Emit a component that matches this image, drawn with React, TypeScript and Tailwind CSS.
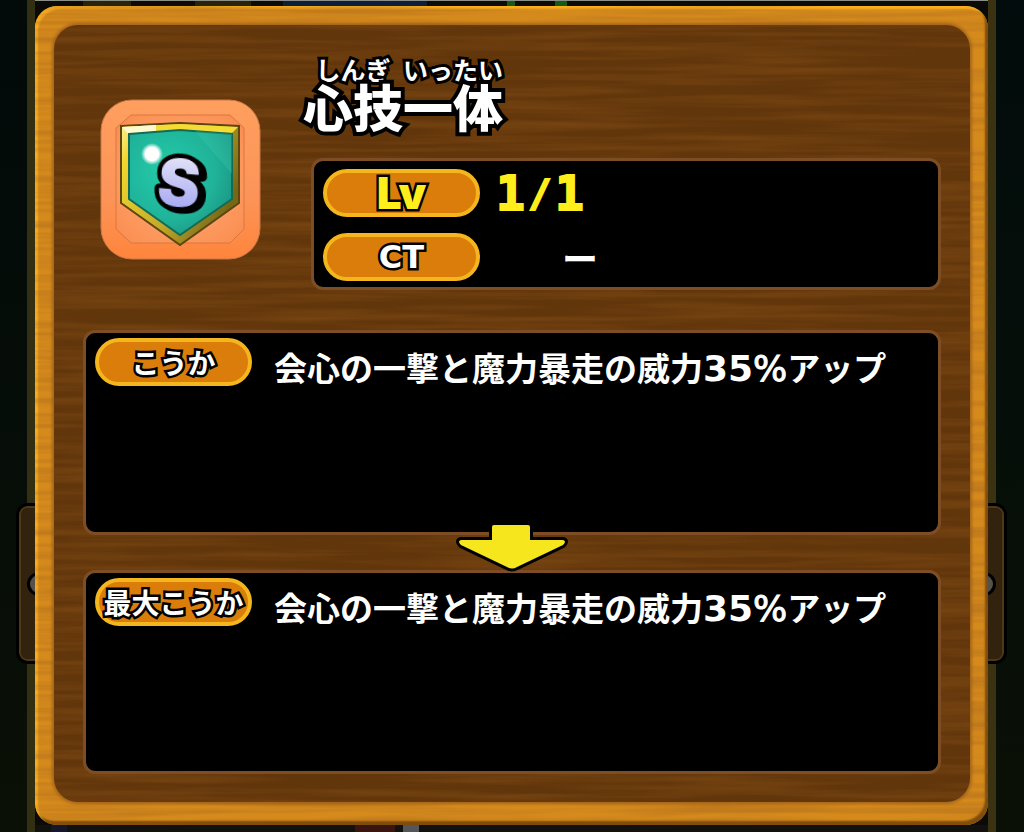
import type { ReactNode } from 'react';

const jp = "font-['Noto_Sans_CJK_JP',sans-serif]";
const latin = "font-['DejaVu_Sans',sans-serif]";

const effects = [
  { label: 'こうか', power: '35' },
  { label: '最大こうか', power: '35' },
];

function WoodGrain() {
  return (
    <svg className="pointer-events-none absolute inset-0 h-full w-full rounded-[22px]" aria-hidden="true">
      <filter id="grain" x="0" y="0" width="100%" height="100%">
        <feTurbulence type="fractalNoise" baseFrequency="0.005 0.13" numOctaves={3} seed={8} />
        <feColorMatrix values="0 0 0 0 0.3  0 0 0 0 0.1  0 0 0 0 0.01  0.8 0 0 0 -0.3" />
      </filter>
      <rect width="100%" height="100%" filter="url(#grain)" />
    </svg>
  );
}

function SideStrip({ right }: { right?: boolean }) {
  return (
    <div
      className={
        right
          ? 'relative w-9 shrink-0 border-l-8 border-[#3b3211] bg-linear-to-b from-[#020c0c] to-[#0b1006]'
          : 'relative w-[35px] shrink-0 border-r-8 border-[#332f13] bg-linear-to-b from-[#020a0a] to-[#0b1006]'
      }
    >
      <div
        className={
          right
            ? 'absolute top-[503px] -left-2 h-[161px] w-[19px] overflow-hidden rounded-r-xl border-3 border-l-0 border-black bg-[#33220d]'
            : 'absolute top-[503px] -right-2 h-[161px] w-[19px] overflow-hidden rounded-l-xl border-3 border-r-0 border-black bg-[#33220d]'
        }
      >
        <div
          className={
            right
              ? 'h-full rounded-r-lg border-2 border-l-0 border-[#4a3a18]'
              : 'h-full rounded-l-lg border-2 border-r-0 border-[#4a3a18]'
          }
        />
        <div
          className={
            right
              ? 'absolute top-[66px] -left-4 size-6 rounded-full border-3 border-black bg-[#55504a]'
              : 'absolute top-[66px] -right-4 size-6 rounded-full border-3 border-black bg-[#55504a]'
          }
        />
      </div>
    </div>
  );
}

function SkillIcon() {
  return (
    <svg viewBox="0 0 161 161" className="mt-[42px] ml-[17px] size-[161px] shrink-0" role="img" aria-label="S">
      <defs>
        <linearGradient id="tile" x1="0" y1="0" x2="0" y2="1">
          <stop offset="0" stopColor="#ff9f5e" />
          <stop offset="0.6" stopColor="#fc9459" />
          <stop offset="1" stopColor="#ff853c" />
        </linearGradient>
        <radialGradient id="tileGlow" cx="0.5" cy="0.5" r="0.7">
          <stop offset="0" stopColor="#ffb27c" />
          <stop offset="1" stopColor="#fb8b4e" />
        </radialGradient>
        <linearGradient id="gold" x1="0" y1="0" x2="1" y2="0.5">
          <stop offset="0" stopColor="#fff3a0" />
          <stop offset="0.15" stopColor="#f2d52c" />
          <stop offset="0.6" stopColor="#c4aa2a" />
          <stop offset="1" stopColor="#776816" />
        </linearGradient>
        <radialGradient id="gem" cx="0.38" cy="0.4" r="0.75">
          <stop offset="0" stopColor="#22cda9" />
          <stop offset="0.6" stopColor="#20b39a" />
          <stop offset="1" stopColor="#1a8f7e" />
        </radialGradient>
        <radialGradient id="shine">
          <stop offset="0.6" stopColor="#fff" />
          <stop offset="1" stopColor="#fff" stopOpacity="0" />
        </radialGradient>
        <linearGradient id="letter" x1="0" y1="0" x2="0" y2="1">
          <stop offset="0.2" stopColor="#dfdff8" />
          <stop offset="0.9" stopColor="#a2a4f2" />
        </linearGradient>
      </defs>
      <rect x="1" y="1" width="159" height="159" rx="31" fill="url(#tile)" stroke="#c87848" />
      <path d="M31 16H130L144 29V130L130 144H31L16 130V29Z" fill="url(#tileGlow)" stroke="#d97840" />
      <path d="M21 27L80 24L139 27V104L80 146L21 104Z" fill="url(#gold)" stroke="#5c4611" strokeWidth="2" />
      <path d="M22 28L80 25L138 28L132 34L80 31L28 35Z" fill="#f5dc35" />
      <path d="M22 28L56 26V32L28 35Z" fill="#fff9cf" />
      <path d="M29 35L80 31L132 35V100L80 136L29 100Z" fill="url(#gem)" stroke="#146b55" strokeWidth="2" />
      <path d="M95 32L132 35V75Z" fill="#4de0c0" opacity="0.2" />
      <circle cx="52" cy="55" r="11" fill="url(#shine)" />
      <text
        x="79"
        y="107"
        transform="rotate(5 79 84)"
        textAnchor="middle"
        fontSize="64"
        fontWeight="900"
        className="font-['Inter',sans-serif] [filter:drop-shadow(4px_2px_0_#000)] [paint-order:stroke_fill]"
        fill="url(#letter)"
        stroke="#000"
        strokeWidth="9"
        strokeLinejoin="round"
      >
        S
      </text>
    </svg>
  );
}

function Furigana({ base, reading }: { base: string; reading: string }) {
  return (
    <ruby className="inline-flex flex-col-reverse items-center text-[50px] leading-[54px]">
      {base}
      <rt className="text-[25px] leading-6 font-bold [-webkit-text-stroke:6px_black]">{reading}</rt>
    </ruby>
  );
}

function Pill({ children }: { children: ReactNode }) {
  return (
    <div className="flex h-12 w-[157px] shrink-0 items-center justify-center rounded-full border-4 border-[#f5b51d] bg-[#da7d0b] text-[28px] leading-none font-bold whitespace-nowrap text-white [-webkit-text-stroke:5px_black] [paint-order:stroke_fill]">
      {children}
    </div>
  );
}

function DownArrow() {
  return (
    <div className="relative h-[35px] shrink-0">
      <svg
        viewBox="0 0 114 50"
        className="absolute -bottom-0.5 left-1/2 h-[50px] w-[114px] -translate-x-1/2"
        aria-hidden="true"
      >
        <path
          d="M39 3H73Q75 3 75 5V18H108Q112 19 108 23L62 45Q57 48 52 45L6 23Q2 19 6 18H37V5Q37 3 39 3Z"
          fill="#f5e61e"
          stroke="#000"
          strokeWidth="6"
          strokeLinejoin="round"
          className="[paint-order:stroke_fill]"
        />
      </svg>
    </div>
  );
}

function EffectBox({ label, power }: { label: string; power: string }) {
  return (
    <section className="flex min-h-28 flex-1 items-start gap-[22px] rounded-xl border-3 border-[#7d4e25] bg-black pt-[5px] pl-[9px]">
      <h2>
        <Pill>{label}</Pill>
      </h2>
      <p className="mt-[10px] text-[33px] leading-[38px] font-bold whitespace-nowrap text-white">
        会心の一撃と魔力暴走の威力
        <span className={`text-[36px] leading-none ${latin}`}>
          {power}
          <span className="font-normal [-webkit-text-stroke:1px_white]">%</span>
        </span>
        アップ
      </p>
    </section>
  );
}

export default function App() {
  return (
    <div className={`flex min-h-screen bg-[#0a0a08] ${jp}`}>
      <SideStrip />
      <main className="flex min-w-0 flex-1 flex-col">
        <div className="flex h-1.5 shrink-0 border-t border-[#8b8f88] bg-[#0c0b08]">
          <div className="ml-12 w-12 bg-[#292307]" />
          <div className="ml-16 w-14 bg-[#292307]" />
          <div className="ml-8 w-36 bg-[#0b1f3c]" />
          <div className="ml-20 w-2 bg-[#135c12]" />
          <div className="ml-10 w-3 bg-[#135c12]" />
        </div>

        <div className="relative flex flex-1 flex-col rounded-[22px] bg-[#d58a1c] p-[19px] pr-[18px] pb-[23px] shadow-[inset_3px_3px_2px_#f9ae20,inset_-3px_-4px_2px_#7d4b0b]">
          <div className="flex flex-1 flex-col rounded-[24px] bg-[#62360b] px-[29px] pt-8 pb-7 shadow-[0_0_3px_2px_#a8671a]">
            <WoodGrain />
            <header className="relative mb-10 flex">
              <SkillIcon />
              <div className="ml-[50px] min-w-0 flex-1">
                <h1 className="-ml-2 flex h-[101px] items-start pt-0.5 font-['Liberation_Sans','Noto_Sans_CJK_JP',sans-serif] font-black text-white [-webkit-text-stroke:8px_black] [paint-order:stroke_fill]">
                  <Furigana base="心技" reading="しんぎ" />
                  <Furigana base="一体" reading="いったい" />
                </h1>
                <dl className="flex flex-col gap-4 rounded-xl border-3 border-[#7d4e25] bg-black px-[9px] pt-2 pb-1.5">
                  <div className="flex h-12 items-center gap-4">
                    <dt>
                      <Pill>
                        <span className="font-['Inter',sans-serif] text-[44px] font-black text-[#ffee1c]">Lv</span>
                      </Pill>
                    </dt>
                    <dd className="flex items-center font-['DejaVu_Sans_Mono',monospace] text-[48px] leading-none font-bold text-[#ffee1c] [-webkit-text-stroke:2px_#ffee1c]">
                      1<span className="w-[30px] text-center text-[38px]">/</span>1
                    </dd>
                  </div>
                  <div className="flex h-12 items-center gap-4">
                    <dt>
                      <Pill>
                        <span className={`text-[32px] ${latin}`}>CT</span>
                      </Pill>
                    </dt>
                    <dd className="ml-[66px] text-[36px] leading-none font-bold text-white">ー</dd>
                  </div>
                </dl>
              </div>
            </header>

            <div className="relative flex flex-1 flex-col">
              <EffectBox {...effects[0]} />
              <DownArrow />
              <EffectBox {...effects[1]} />
            </div>
          </div>
        </div>

        <div className="flex h-[7px] shrink-0 bg-[#12110e]">
          <div className="ml-4 w-4 bg-[#16162a]" />
          <div className="ml-72 w-10 bg-[#3a1510]" />
          <div className="ml-2 w-4 bg-[#55565a]" />
        </div>
      </main>
      <SideStrip right />
    </div>
  );
}
